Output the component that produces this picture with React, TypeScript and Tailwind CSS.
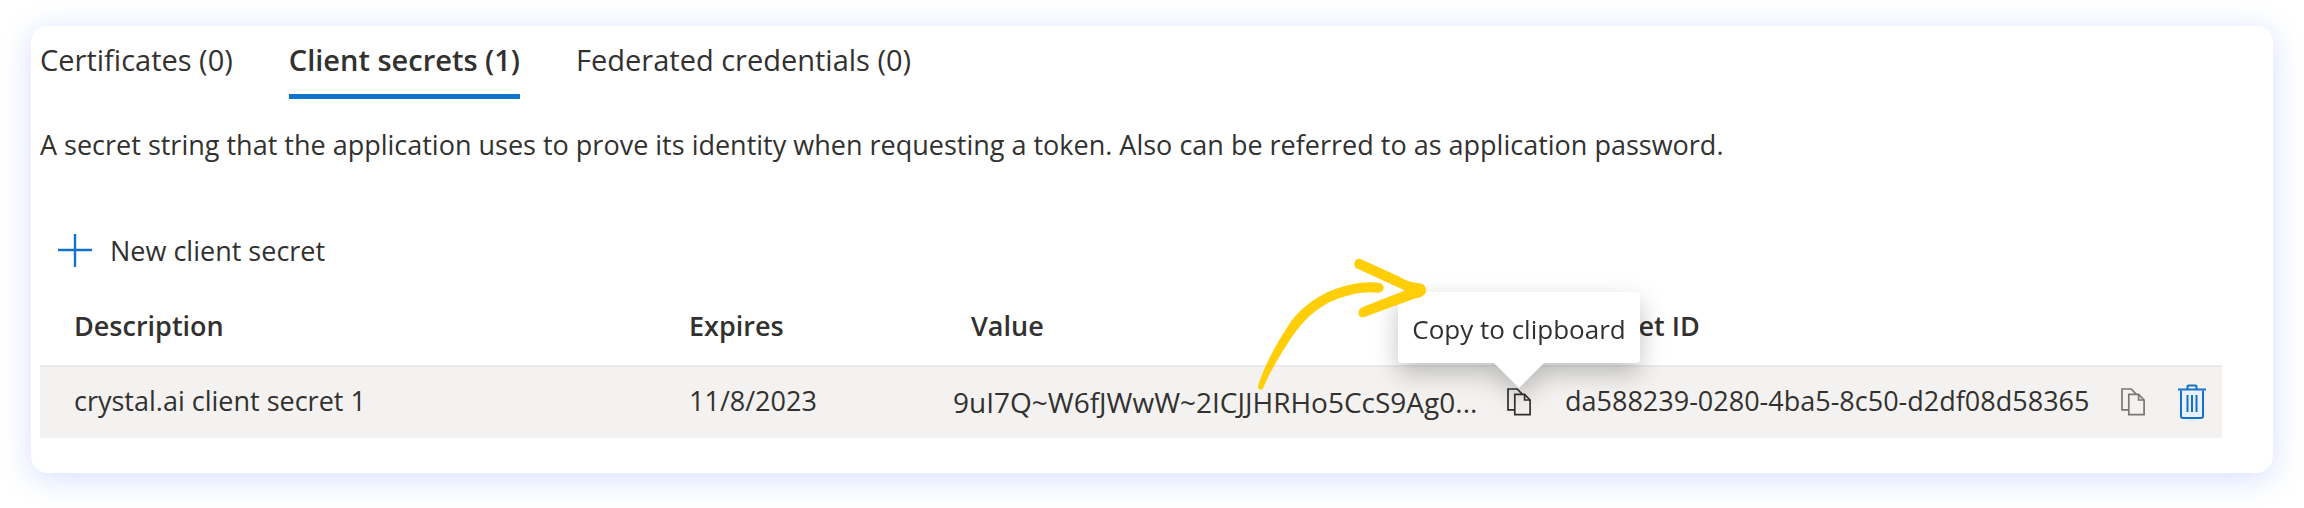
import { useState } from "react";
import clsx from "clsx";

const tabs = [
  { id: "certificates", label: "Certificates (0)" },
  { id: "secrets", label: "Client secrets (1)" },
  { id: "federated", label: "Federated credentials (0)" },
];

const secrets = [
  {
    description: "crystal.ai client secret 1",
    expires: "11/8/2023",
    value: "9uI7Q~W6fJWwW~2ICJJHRHo5CcS9Ag0...",
    id: "da588239-0280-4ba5-8c50-d2df08d58365",
  },
];

function PlusIcon() {
  return (
    <svg className="w-[34px] h-[34px]" viewBox="0 0 34 34" fill="none" stroke="#1470c8" strokeWidth="2.4" aria-hidden="true">
      <path d="M17 0v33M0 16h34" />
    </svg>
  );
}

function CopyIcon() {
  return (
    <svg className="w-6 h-7" viewBox="0 0 24 28" fill="none" stroke="currentColor" strokeWidth="1.7" aria-hidden="true">
      <path d="M7.5 21.8H1V1h9.2l5.2 5.4" />
      <path d="M7.8 6.4h9.8l5.5 5.6v14.6H7.8z" />
      <path d="M17.6 6.4v5.6h5.5" />
    </svg>
  );
}

function TrashIcon() {
  return (
    <svg className="w-7 h-9" viewBox="0 0 28 36" fill="none" stroke="#1470c8" strokeWidth="2" aria-hidden="true">
      <path d="M3 6.5v25.6a2 2 0 0 0 2 2h18a2 2 0 0 0 2-2V6.5" fill="#e9f2fb" />
      <path d="M0 5.5h28" />
      <path d="M9.5 5.2V2.5a1 1 0 0 1 1-1h7a1 1 0 0 1 1 1v2.7" />
      <path d="M9.5 11v17M14 11v17M18.5 11v17" />
    </svg>
  );
}

function Arrow() {
  return (
    <svg
      className="absolute z-20 pointer-events-none w-[170px] h-[134px] right-[137px] bottom-[31px]"
      viewBox="0 0 170 134"
      fill="#ffce07"
      aria-hidden="true"
    >
      <path d="M0.3 127C4 114 16 89 30 68C47 42 76 27 107 24.500C113 24 118 24.200 122 25C128 27 126 34.800 120 34.800C112 33.500 103 34.500 96 36C72 41 54 52 39 72C27 88 13 112 5.500 129C4 133.500 -1 132 0.300 127Z" />
      <path d="M103 1.200L141 18.500C147 22 153 24.500 159 25C165.500 25 169 29 168 34C166.500 37.500 162 40 157 40.500L109 58C103.500 61.500 99 58 101 52.500C102 50.500 103.500 49.500 106 48.500L147 32.500L99 10.500C93.500 8 97 -1 103 1.200Z" />
    </svg>
  );
}

function Tooltip() {
  return (
    <div
      role="tooltip"
      className="absolute z-10 bottom-full left-1/2 -translate-x-1/2 mb-[25px] h-[71px] w-[242px] pt-1 flex items-center justify-center rounded bg-white text-[26px] text-[#323130] whitespace-nowrap drop-shadow-[0_10px_12px_rgba(0,0,0,0.24)]"
    >
      Copy to clipboard
      <svg className="absolute top-full left-1/2 -translate-x-1/2 w-[50px] h-[25px]" viewBox="0 0 50 25" fill="#fff" aria-hidden="true">
        <path d="M0 0h50L25 25z" />
      </svg>
    </div>
  );
}

export default function App() {
  const [active, setActive] = useState("secrets");

  return (
    <div className="bg-white pt-[26px] px-[31px] pb-[35px] font-['Open_Sans','Noto_Sans',sans-serif] text-[#323130]">
      <main className="rounded-[17px] bg-white pl-[9px] pr-[51px] pb-[35px] shadow-[0_5px_30px_rgba(70,120,255,0.24)]">
        <div role="tablist" className="flex gap-14 text-[29px]">
          {tabs.map((tab) => (
            <button
              key={tab.id}
              type="button"
              role="tab"
              aria-selected={tab.id === active}
              onClick={() => setActive(tab.id)}
              className={clsx(
                "h-[73px] border-b-[5px] whitespace-nowrap",
                tab.id === active ? "border-[#0f74cb] font-semibold" : "border-transparent"
              )}
            >
              {tab.label}
            </button>
          ))}
        </div>

        <p className="mt-[26px] text-[27px] leading-10">
          A secret string that the application uses to prove its identity when requesting a token. Also can be referred
          to as application password.
        </p>

        <button type="button" className="mt-[58px] ml-[18px] h-14 flex items-center gap-[18px] text-[27px]">
          <PlusIcon />
          New client secret
        </button>

        <table className="mt-[6px] w-full table-fixed text-[27px] text-left">
          <colgroup>
            <col className="w-[649px]" />
            <col className="w-[264px]" />
            <col className="w-[612px]" />
            <col className="w-[594px]" />
            <col className="w-[63px]" />
          </colgroup>
          <thead>
            <tr className="h-20">
              <th className="pt-[2px] pl-[34px] font-semibold">Description</th>
              <th className="pt-[2px] font-semibold">Expires</th>
              <th className="pt-[2px] pl-[18px] font-semibold">Value</th>
              <th className="pt-[2px] pl-[18px] font-semibold">Secret ID</th>
              <th aria-label="Actions" />
            </tr>
          </thead>
          <tbody>
            {secrets.map((secret) => (
              <tr key={secret.id} className="h-[73px] bg-[#f3f2f1] shadow-[inset_0_2px_0_#ebeae9]">
                <td className="pl-[34px]">{secret.description}</td>
                <td>{secret.expires}</td>
                <td className="text-[28px]">
                  <div className="relative flex items-center justify-between pr-[34px]">
                    {secret.value}
                    <button type="button" aria-label="Copy value" className="relative">
                      <CopyIcon />
                      <Tooltip />
                    </button>
                    <Arrow />
                  </div>
                </td>
                <td>
                  <div className="flex items-center justify-between pr-[14px]">
                    {secret.id}
                    <button type="button" aria-label="Copy secret ID" className="text-[#797775]">
                      <CopyIcon />
                    </button>
                  </div>
                </td>
                <td>
                  <button type="button" aria-label="Delete secret" className="flex ml-[19px]">
                    <TrashIcon />
                  </button>
                </td>
              </tr>
            ))}
          </tbody>
        </table>
      </main>
    </div>
  );
}
